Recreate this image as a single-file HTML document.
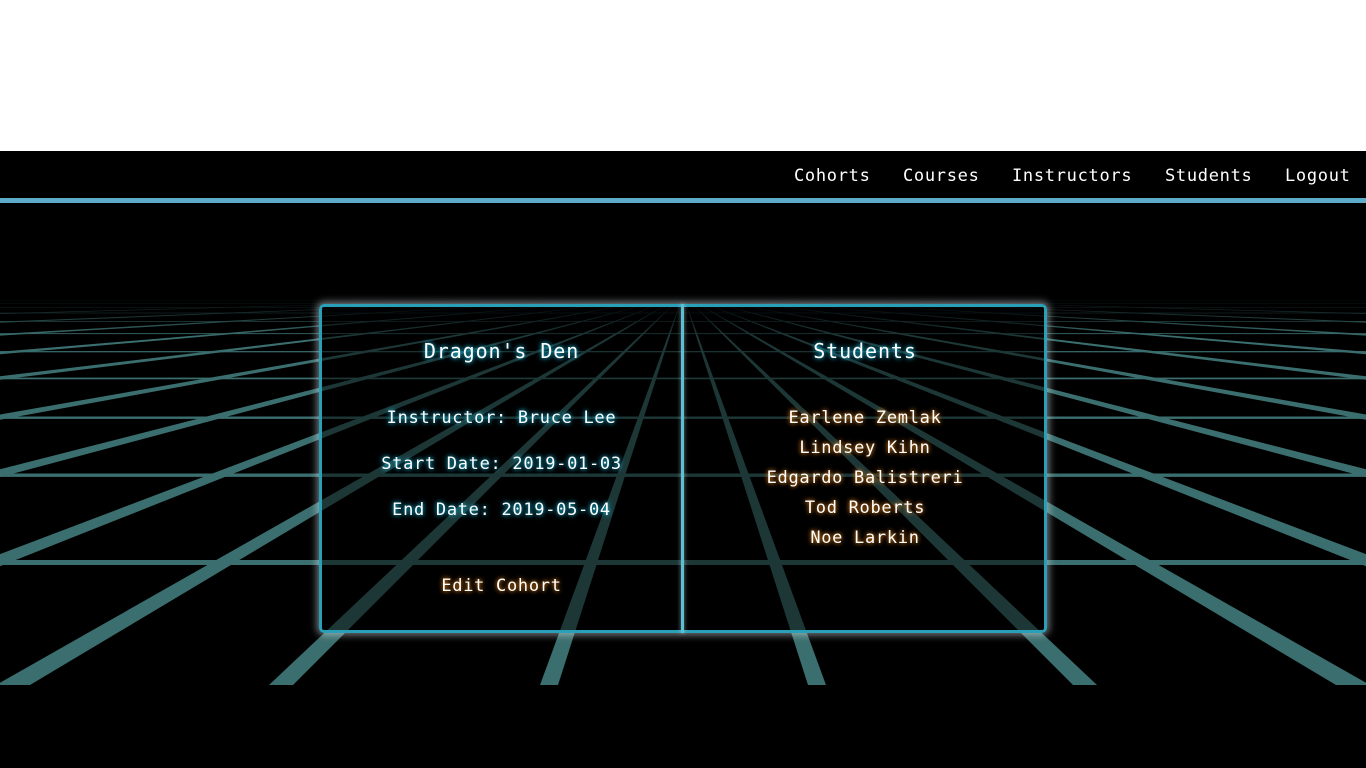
<!DOCTYPE html>
<html><head><meta charset="utf-8"><style>
html,body{margin:0;padding:0;width:1366px;height:768px;overflow:hidden;background:#000;font-family:"DejaVu Sans Mono","Liberation Mono",monospace;}
#top{position:absolute;left:0;top:0;width:1366px;height:151px;background:#fff;}
#top2{position:absolute;left:0;top:151px;width:101px;height:1px;background:#fff;}
#nav{position:absolute;left:0;top:151px;width:1366px;height:47px;background:#000;}
#navline{position:absolute;left:0;top:198px;width:1366px;height:5px;background:#5eaccb;}
#nav a{position:absolute;top:15px;color:#fff;font-size:17px;letter-spacing:0.7px;text-decoration:none;}
svg{position:absolute;left:0;top:0;}
#card{position:absolute;left:319px;top:304px;width:722px;height:323px;border:3px solid #2aa0b8;border-radius:5px;background:rgba(0,0,0,0.5);box-shadow:0 0 8px 2px rgba(220,230,235,0.55);}
#div{position:absolute;left:681px;top:304px;width:3px;height:329px;background:#5cc0d4;box-shadow:0 0 4px rgba(200,240,250,0.6);}
.t{position:absolute;color:#fff;text-align:center;white-space:nowrap;font-size:17px;letter-spacing:0.7px;}
.c{text-shadow:0 0 4px #19c4e8,0 0 7px rgba(25,190,230,0.5);}
.o{text-shadow:0 0 4px #e0801a,0 0 6px rgba(220,120,30,0.5);}
.h{font-size:20px;letter-spacing:0.9px;}
</style></head><body>
<div id="top"></div><div id="top2"></div>
<div id="nav">
<a style="left:794px">Cohorts</a>
<a style="left:903px">Courses</a>
<a style="left:1012px">Instructors</a>
<a style="left:1165px">Students</a>
<a style="left:1285px">Logout</a>
</div>
<div id="navline"></div>
<svg width="1366" height="768" style="top:0">
<defs>
<linearGradient id="fade" x1="0" y1="0" x2="0" y2="1">
<stop offset="0" stop-color="#000" stop-opacity="1"/>
<stop offset="1" stop-color="#000" stop-opacity="0"/>
</linearGradient>
<clipPath id="cl"><rect x="0" y="299" width="1366" height="386"/></clipPath>
</defs>
<g clip-path="url(#cl)" fill="#3b6e6e">
<polygon points="683,295 540,685 558,685"/>
<polygon points="683,295 269,685 293,685"/>
<polygon points="683,295 -4,685 30,685"/>
<polygon points="683,295 -345,685 -299,685"/>
<polygon points="683,295 -846,685 -780,685"/>
<polygon points="683,295 -1547,685 -1453,685"/>
<polygon points="683,295 -2594,685 -2458,685"/>
<polygon points="683,295 -4007,685 -3811,685"/>
<polygon points="683,295 -6163,685 -5871,685"/>
<polygon points="683,295 -9330,685 -8904,685"/>
<polygon points="683,295 -13928,685 -13306,685"/>
<polygon points="683,295 808,685 826,685"/>
<polygon points="683,295 1073,685 1097,685"/>
<polygon points="683,295 1336,685 1370,685"/>
<polygon points="683,295 1665,685 1711,685"/>
<polygon points="683,295 2146,685 2212,685"/>
<polygon points="683,295 2819,685 2913,685"/>
<polygon points="683,295 3824,685 3960,685"/>
<polygon points="683,295 5177,685 5373,685"/>
<polygon points="683,295 7237,685 7529,685"/>
<polygon points="683,295 10270,685 10696,685"/>
<polygon points="683,295 14672,685 15294,685"/>
<rect x="0" y="560" width="1366" height="5"/>
<rect x="0" y="473.5" width="1366" height="3.4"/>
<rect x="0" y="416.5" width="1366" height="2.4"/>
<rect x="0" y="377.6" width="1366" height="1.7"/>
<rect x="0" y="351.1" width="1366" height="1.2"/>
<rect x="0" y="333.2" width="1366" height="0.9"/>
<rect x="0" y="321" width="1366" height="0.7"/>
<rect x="0" y="312.7" width="1366" height="0.6"/>
<rect x="0" y="307.1" width="1366" height="0.5"/>
<rect x="0" y="303.3" width="1366" height="0.5"/>
<rect x="0" y="300.7" width="1366" height="0.5"/>
<rect x="0" y="296" width="1366" height="40" fill="url(#fade)"/>
</g>
</svg>
<div id="card"></div>
<div id="div"></div>
<div class="t c h" style="left:322px;width:359px;top:339px">Dragon's Den</div>
<div class="t c" style="left:322px;width:359px;top:408px">Instructor: Bruce Lee</div>
<div class="t c" style="left:322px;width:359px;top:454px">Start Date: 2019-01-03</div>
<div class="t c" style="left:322px;width:359px;top:500px">End Date: 2019-05-04</div>
<div class="t o" style="left:322px;width:359px;top:576px">Edit Cohort</div>
<div class="t c h" style="left:684px;width:362px;top:339px">Students</div>
<div class="t o" style="left:684px;width:362px;top:408px">Earlene Zemlak</div>
<div class="t o" style="left:684px;width:362px;top:438px">Lindsey Kihn</div>
<div class="t o" style="left:684px;width:362px;top:468px">Edgardo Balistreri</div>
<div class="t o" style="left:684px;width:362px;top:498px">Tod Roberts</div>
<div class="t o" style="left:684px;width:362px;top:528px">Noe Larkin</div>
</body></html>
